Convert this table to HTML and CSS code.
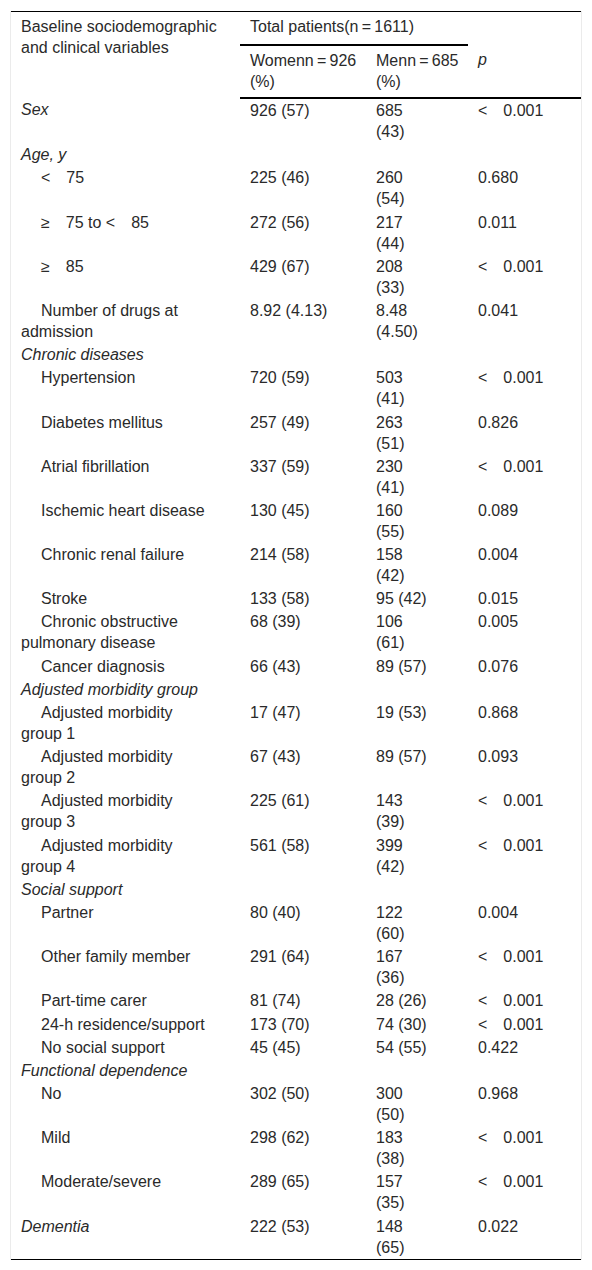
FILE: index.html
```html
<!DOCTYPE html>
<html>
<head>
  <link rel="stylesheet" href="styles.css">
</head>
<body>
  <div class="table-wrap">
    <table class="data-table">
      <colgroup>
        <col class="col-var">
        <col class="col-women">
        <col class="col-men">
        <col class="col-p">
      </colgroup>
      <thead>
        <tr>
          <th rowspan="2">Baseline sociodemographic and clinical variables</th>
          <th colspan="2" class="group-head">Total patients(n&#8239;=&#8239;1611)</th>
          <th></th>
        </tr>
        <tr>
          <th>Womenn&#8239;=&#8239;926 (%)</th>
          <th>Menn&#8239;=&#8239;685 (%)</th>
          <th><em>p</em></th>
        </tr>
      </thead>
      <tbody>
        <tr><td class="section">Sex</td><td>926 (57)</td><td>685<br>(43)</td><td>&lt;&emsp;0.001</td></tr>
        <tr><td class="section" colspan="4">Age, y</td></tr>
        <tr><td class="sub">&lt;&emsp;75</td><td>225 (46)</td><td>260<br>(54)</td><td>0.680</td></tr>
        <tr><td class="sub">&ge;&emsp;75 to &lt;&emsp;85</td><td>272 (56)</td><td>217<br>(44)</td><td>0.011</td></tr>
        <tr><td class="sub">&ge;&emsp;85</td><td>429 (67)</td><td>208<br>(33)</td><td>&lt;&emsp;0.001</td></tr>
        <tr><td class="sub">Number of drugs at admission</td><td>8.92 (4.13)</td><td>8.48<br>(4.50)</td><td>0.041</td></tr>
        <tr><td class="section" colspan="4">Chronic diseases</td></tr>
        <tr><td class="sub">Hypertension</td><td>720 (59)</td><td>503<br>(41)</td><td>&lt;&emsp;0.001</td></tr>
        <tr><td class="sub">Diabetes mellitus</td><td>257 (49)</td><td>263<br>(51)</td><td>0.826</td></tr>
        <tr><td class="sub">Atrial fibrillation</td><td>337 (59)</td><td>230<br>(41)</td><td>&lt;&emsp;0.001</td></tr>
        <tr><td class="sub">Ischemic heart disease</td><td>130 (45)</td><td>160<br>(55)</td><td>0.089</td></tr>
        <tr><td class="sub">Chronic renal failure</td><td>214 (58)</td><td>158<br>(42)</td><td>0.004</td></tr>
        <tr><td class="sub">Stroke</td><td>133 (58)</td><td>95 (42)</td><td>0.015</td></tr>
        <tr><td class="sub">Chronic obstructive pulmonary disease</td><td>68 (39)</td><td>106<br>(61)</td><td>0.005</td></tr>
        <tr><td class="sub">Cancer diagnosis</td><td>66 (43)</td><td>89 (57)</td><td>0.076</td></tr>
        <tr><td class="section" colspan="4">Adjusted morbidity group</td></tr>
        <tr><td class="sub">Adjusted morbidity group 1</td><td>17 (47)</td><td>19 (53)</td><td>0.868</td></tr>
        <tr><td class="sub">Adjusted morbidity group 2</td><td>67 (43)</td><td>89 (57)</td><td>0.093</td></tr>
        <tr><td class="sub">Adjusted morbidity group 3</td><td>225 (61)</td><td>143<br>(39)</td><td>&lt;&emsp;0.001</td></tr>
        <tr><td class="sub">Adjusted morbidity group 4</td><td>561 (58)</td><td>399<br>(42)</td><td>&lt;&emsp;0.001</td></tr>
        <tr><td class="section" colspan="4">Social support</td></tr>
        <tr><td class="sub">Partner</td><td>80 (40)</td><td>122<br>(60)</td><td>0.004</td></tr>
        <tr><td class="sub">Other family member</td><td>291 (64)</td><td>167<br>(36)</td><td>&lt;&emsp;0.001</td></tr>
        <tr><td class="sub">Part-time carer</td><td>81 (74)</td><td>28 (26)</td><td>&lt;&emsp;0.001</td></tr>
        <tr><td class="sub">24-h residence/support</td><td>173 (70)</td><td>74 (30)</td><td>&lt;&emsp;0.001</td></tr>
        <tr><td class="sub">No social support</td><td>45 (45)</td><td>54 (55)</td><td>0.422</td></tr>
        <tr><td class="section" colspan="4">Functional dependence</td></tr>
        <tr><td class="sub">No</td><td>302 (50)</td><td>300<br>(50)</td><td>0.968</td></tr>
        <tr><td class="sub">Mild</td><td>298 (62)</td><td>183<br>(38)</td><td>&lt;&emsp;0.001</td></tr>
        <tr><td class="sub">Moderate/severe</td><td>289 (65)</td><td>157<br>(35)</td><td>&lt;&emsp;0.001</td></tr>
        <tr><td class="section">Dementia</td><td>222 (53)</td><td>148<br>(65)</td><td>0.022</td></tr>
      </tbody>
    </table>
  </div>
</body>
</html>
```

FILE: styles.css
```css
body {
  margin: 0;
  background: #fff;
  font-family: "Liberation Sans", Arial, sans-serif;
  font-size: 16px;
  color: #2a2a2a;
}

.table-wrap {
  margin: 11px 10px;
  border-left: 1px solid #ebebeb;
  border-right: 1px solid #ebebeb;
}

.data-table {
  width: 100%;
  border-collapse: collapse;
  table-layout: fixed;
  line-height: 21px;
  border-top: 1px solid #000;
  border-bottom: 1px solid #000;
}

.col-var { width: 229px; }
.col-women { width: 126px; }
.col-men { width: 102px; }
.col-p { width: 113px; }

.data-table th {
  font-weight: normal;
  text-align: left;
  vertical-align: top;
  padding: 4px 10px 5px;
}

.data-table thead tr:last-child th {
  border-bottom: 2px solid #000;
}

.data-table .group-head {
  border-bottom: 2px solid #000;
  padding-bottom: 7px;
}

.data-table td {
  vertical-align: top;
  padding: 1px 10px 1.2px;
}

.data-table td:first-child {
  padding-right: 28px;
}

.section {
  font-style: italic;
}

.sub {
  text-indent: 20px;
}
```
